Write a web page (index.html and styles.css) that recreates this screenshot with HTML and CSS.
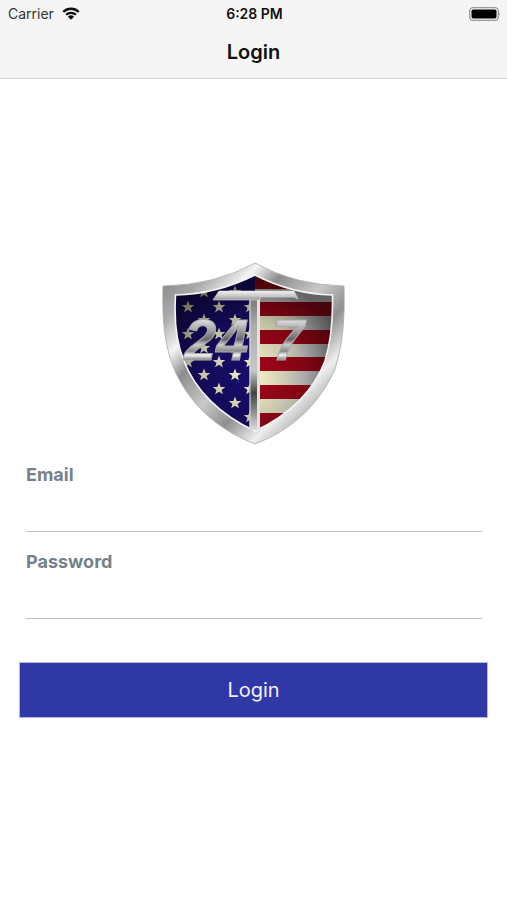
FILE: index.html
```
<!DOCTYPE html>
<html lang="en">
<head>
<meta charset="utf-8">
<meta name="viewport" content="width=device-width, initial-scale=1.0">
<title>Login</title>
<link rel="stylesheet" href="styles.css">
</head>
<body>
<header class="top">
  <div class="status-bar">
    <div class="carrier">
      <span>Carrier</span>
      <svg class="wifi" viewBox="0 0 18 13" aria-hidden="true">
        <path d="M1.3 4.9a11 11 0 0 1 15.4 0M4.1 7.8a7 7 0 0 1 9.8 0" fill="none" stroke="#111" stroke-width="2.3"/>
        <path d="M5.9 9.7a4.5 4.5 0 0 1 6.2 0L9 12.8z" fill="#111"/>
      </svg>
    </div>
    <span class="time">6:28 PM</span>
    <svg class="battery" viewBox="0 0 32 14" aria-hidden="true">
      <rect x="0.7" y="0.7" width="28.6" height="12.6" rx="3.5" fill="none" stroke="#999" stroke-width="1.3"/>
      <rect x="2.5" y="2.5" width="25" height="9" rx="1.8" fill="#000"/>
      <path d="M30.5 5q1.5 2 0 4z" fill="#888"/>
    </svg>
  </div>
  <h1>Login</h1>
</header>

<main>
  <svg class="logo" viewBox="1 0 190 190" role="img" aria-label="24 T 7">
    <defs>
      <linearGradient id="rim" x1="0" y1="0" x2="1" y2="1">
        <stop offset="0" stop-color="#777"/>
        <stop offset=".16" stop-color="#aaa"/>
        <stop offset=".27" stop-color="#f4f4f4"/>
        <stop offset=".36" stop-color="#8c8c8c"/>
        <stop offset=".5" stop-color="#c9c9c9"/>
        <stop offset=".62" stop-color="#8f8f8f"/>
        <stop offset=".74" stop-color="#eee"/>
        <stop offset=".86" stop-color="#999"/>
        <stop offset="1" stop-color="#ddd"/>
      </linearGradient>
      <linearGradient id="digits" x1="0" y1="0" x2="0" y2="1">
        <stop offset=".2" stop-color="#ddd"/>
        <stop offset=".34" stop-color="#aaa"/>
        <stop offset=".5" stop-color="#666"/>
        <stop offset=".58" stop-color="#ccc"/>
        <stop offset=".68" stop-color="#888"/>
        <stop offset=".74" stop-color="#f5f5f5"/>
        <stop offset=".82" stop-color="#777"/>
      </linearGradient>
      <linearGradient id="bar" x1="0" y1="0" x2="0" y2="1">
        <stop offset="0" stop-color="#f2f2f2"/>
        <stop offset=".5" stop-color="#ccc"/>
        <stop offset="1" stop-color="#999"/>
      </linearGradient>
      <linearGradient id="stem" x1="0" y1="0" x2="0" y2="1">
        <stop offset="0" stop-color="#777"/>
        <stop offset=".2" stop-color="#aaa"/>
        <stop offset=".55" stop-color="#c8c8c8"/>
        <stop offset=".72" stop-color="#444"/>
        <stop offset=".82" stop-color="#777"/>
        <stop offset="1" stop-color="#ddd"/>
      </linearGradient>
      <linearGradient id="stripe" gradientUnits="userSpaceOnUse" x1="102" y1="0" x2="176" y2="0">
        <stop offset="0" stop-color="#f6f3c9"/>
        <stop offset=".35" stop-color="#ecead0"/>
        <stop offset=".7" stop-color="#d2d2d6"/>
        <stop offset="1" stop-color="#b4b4ba"/>
      </linearGradient>
      <radialGradient id="shade" gradientUnits="userSpaceOnUse" cx="92" cy="116" r="96">
        <stop offset=".1" stop-color="#000" stop-opacity=".03"/>
        <stop offset=".55" stop-color="#000" stop-opacity=".2"/>
        <stop offset="1" stop-color="#000" stop-opacity=".55"/>
      </radialGradient>
      <clipPath id="field">
        <path d="M97 17Q59 36 17.500 37C16 62 18 84 26 103C37 132 62 157 97 173C132 157 156 132 167 103C173 84 175 62 174.500 37Q134 36 97 17z"/>
      </clipPath>
      <path id="star" d="M0-6.500L1.700-2L6.300-2L2.600.9L3.900 5.300L0 2.700L-3.900 5.300L-2.600.9L-6.300-2L-1.700-2z"/>
    </defs>
    <path d="M97 5Q57 27 5 28C4 60 6 86 16 111C31 145 58 171 97 186C136 171 162 145 177 111C185 86 187 60 186 28Q137 27 97 5z" fill="url(#rim)" stroke="#aaa" stroke-width=".8"/>
    <g clip-path="url(#field)">
      <rect width="97" height="190" fill="#180d6c"/>
      <rect x="97" width="93" height="190" fill="#a30618"/>
      <rect x="97" y="31" width="93" height="13" fill="#ddd"/>
      <g fill="url(#stripe)">
        <rect x="97" y="58" width="93" height="14"/>
        <rect x="97" y="86" width="93" height="13"/>
        <rect x="97" y="113" width="93" height="14"/>
        <rect x="97" y="141" width="93" height="14"/>
      </g>
      <g fill="#f2efc9">
        <use href="#star" x="46" y="34"/><use href="#star" x="77" y="34"/>
        <use href="#star" x="30" y="49"/><use href="#star" x="61" y="49"/><use href="#star" x="92" y="49"/>
        <use href="#star" x="46" y="62"/><use href="#star" x="77" y="62"/>
        <use href="#star" x="30" y="76"/><use href="#star" x="61" y="76"/><use href="#star" x="92" y="76"/>
        <use href="#star" x="46" y="90"/><use href="#star" x="77" y="90"/>
        <use href="#star" x="30" y="104"/><use href="#star" x="61" y="104"/><use href="#star" x="92" y="104"/>
        <use href="#star" x="46" y="117"/><use href="#star" x="77" y="117"/>
        <use href="#star" x="61" y="131"/><use href="#star" x="92" y="131"/>
        <use href="#star" x="77" y="145"/><use href="#star" x="92" y="159"/>
      </g>
      <rect width="190" height="190" fill="url(#shade)"/>
    </g>
    <path d="M97 17Q59 36 17.500 37C16 62 18 84 26 103C37 132 62 157 97 173C132 157 156 132 167 103C173 84 175 62 174.500 37Q134 36 97 17z" fill="none" stroke="#f5f5f5" stroke-width="1.600"/>
    <!-- centre beam -->
    <rect x="91.500" y="40" width="10.500" height="132" fill="url(#stem)"/>
    <rect x="99" y="42" width="3" height="130" fill="#e2e2e2"/>
    <rect x="91.500" y="42" width="1" height="128" fill="#ddd"/>
    <path d="M61 33H136L140 41L136 39H102V42H55z" fill="url(#bar)" stroke="#ddd" stroke-width=".6"/>
    <g class="digits">
      <text x="26" y="102">24</text>
      <text x="114" y="102">7</text>
    </g>
  </svg>

  <form>
    <div class="field">
      <label for="email">Email</label>
      <input id="email" type="email">
    </div>
    <div class="field">
      <label for="password">Password</label>
      <input id="password" type="password">
    </div>
    <button type="button">Login</button>
  </form>
</main>
</body>
</html>
```

FILE: styles.css
```
* {
  box-sizing: border-box;
}
body {
  margin: 0;
  background: #fff;
  color: #111;
  font-family: Inter, "Liberation Sans", sans-serif;
}
.top {
  background: #f5f5f5;
  border-bottom: 1px solid #d2d2d2;
}
.status-bar {
  display: grid;
  grid-template-columns: 1fr auto 1fr;
  align-items: center;
  height: 27px;
  padding: 0 6px 0 8px;
  font-size: 14px;
}
.carrier {
  display: flex;
  align-items: center;
  gap: 8px;
  color: #333;
}
.wifi {
  width: 18px;
  height: 13px;
}
.time {
  font-weight: 600;
}
.battery {
  width: 32px;
  height: 14px;
  justify-self: end;
}
h1 {
  margin: 0;
  font-size: 20px;
  font-weight: 600;
  line-height: 51px;
  text-align: center;
}
.logo {
  display: block;
  width: 190px;
  height: 190px;
  margin: 179px auto 0;
}
.digits {
  font-family: "Liberation Sans", Arial, sans-serif;
  font-size: 58px;
  font-weight: bold;
  font-style: italic;
  fill: url(#digits);
  stroke: #aaa;
  stroke-width: 1px;
}
form {
  padding: 14px 19px;
}
.field {
  margin: 0 6px 17px 7px;
}
label {
  display: block;
  color: #75818a;
  font-size: 18px;
  font-weight: 700;
  line-height: 26px;
}
input {
  display: block;
  width: 100%;
  height: 44px;
  padding: 0;
  border: 0;
  border-bottom: 1px solid #bfc2c6;
  outline: none;
  background: none;
  font: inherit;
  font-size: 18px;
}
button {
  display: block;
  width: 100%;
  height: 56px;
  margin-top: 43px;
  border: 1px solid #b5b8e6;
  background: #3038a5;
  color: #f0f1ff;
  font-family: inherit;
  font-size: 20px;
}
```
